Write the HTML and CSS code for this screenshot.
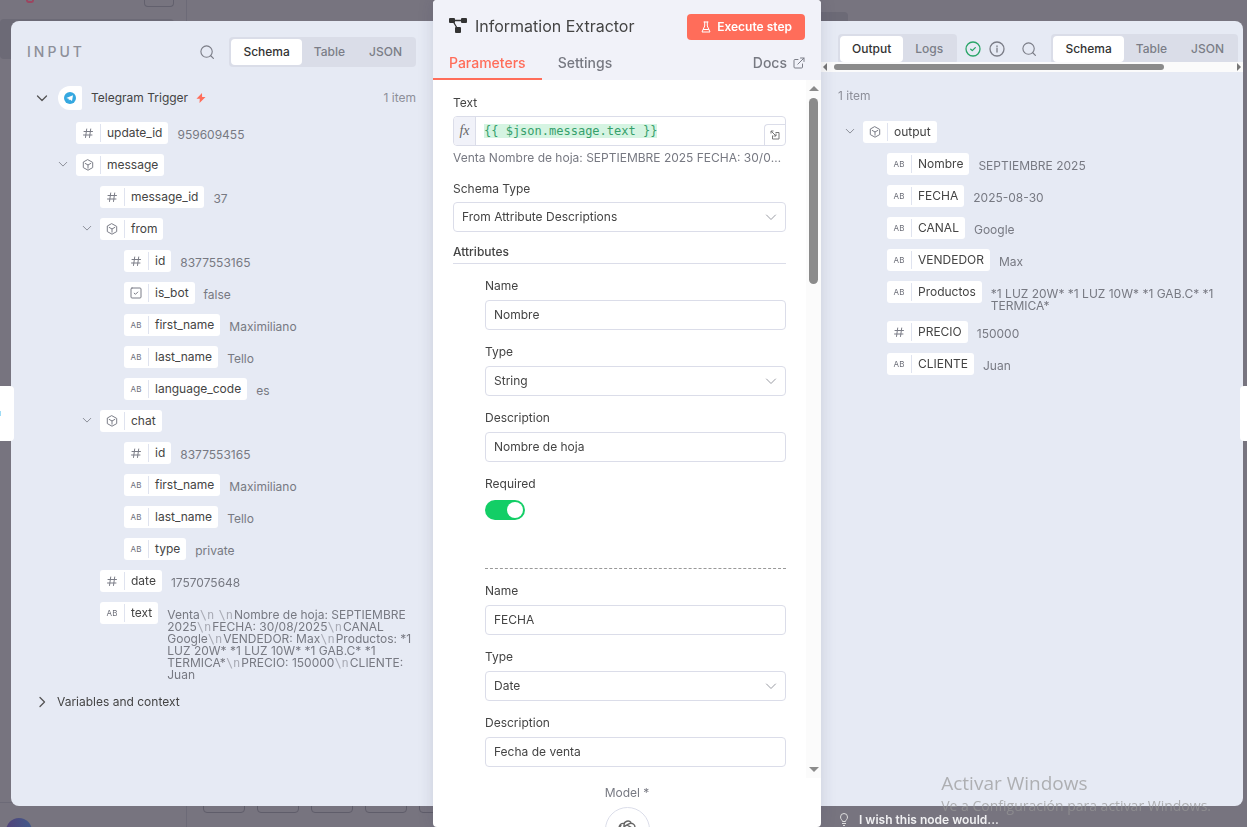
FILE: index.html
```html
<!DOCTYPE html>
<html lang="en">
<head>
  <meta charset="utf-8">
  <meta name="viewport" content="width=device-width, initial-scale=1">
  <title>Information Extractor</title>
  <link rel="stylesheet" href="styles.css">
</head>
<body>
  <!-- shared icons -->
  <svg class="sprite" aria-hidden="true">
    <symbol id="i-search" viewBox="0 0 16 16"><circle cx="7.5" cy="7.5" r="6.500"/><path d="M12.300 12.300l3 3"/></symbol>
    <symbol id="i-chevron" viewBox="0 0 12 12"><path d="M1.500 4L6 8.500 10.500 4"/></symbol>
    <symbol id="i-hash" viewBox="0 0 12 12"><path d="M4.700 2L3.500 10.500M8.700 2L7.500 10.500M2 4.500h8.500M1.500 8H10"/></symbol>
    <symbol id="i-cube" viewBox="0 0 12 12"><path d="M6 .8l4.700 2.600v5.200L6 11.200 1.300 8.600V3.400zM3.200 4.400L6 6l2.800-1.600M6 6v3.200"/></symbol>
    <symbol id="i-check" viewBox="0 0 12 12"><rect x="1" y="1" width="10" height="10" rx="1"/><path d="M4.200 6.200l1.300 1.100L7.800 5"/></symbol>
  </svg>

  <div class="backdrop" aria-hidden="true">
    <div class="sidebar">
      <div class="sidebar-top"><span class="logo"></span><span class="sidebar-btn"></span></div>
      <div class="sidebar-item"></div>
      <div class="sidebar-user"><span class="avatar"></span></div>
    </div>
    <div class="canvas">
      <div class="canvas-tab"></div>
      <div class="canvas-btns"><span></span><span></span><span></span><span></span><span></span></div>
    </div>
  </div>

  <div class="ndv">
    <section class="side side-input">
      <div class="panel">
        <div class="panel-head">
          <h2 class="panel-title">INPUT</h2>
          <button class="icon-btn" aria-label="Search"><svg class="icon icon-14"><use href="#i-search"/></svg></button>
          <div class="radio-group">
            <button class="active">Schema</button><button>Table</button><button>JSON</button>
          </div>
        </div>

        <div class="node-row">
          <svg class="icon dark"><use href="#i-chevron"/></svg>
          <span class="node-icon">
            <svg width="12" height="12" viewBox="0 0 12 12"><circle cx="6" cy="6" r="6" fill="#35a8e0"/><path d="M2.300 5.900L9 3.200 8 9 5.900 7.500 4.900 8.400 4.700 6.800z" fill="#fff"/></svg>
          </span>
          <span class="node-name">Telegram Trigger</span>
          <svg width="10" height="10" viewBox="0 0 10 10"><path d="M6 0L.5 5.800h3.300L3.500 10l6-6H6.100z" fill="#ff6d5a"/></svg>
          <span class="count">1 item</span>
        </div>

        <ul class="tree">
          <li><div class="row"><span class="pill"><i><svg class="icon"><use href="#i-hash"/></svg></i><b>update_id</b></span><span class="value">959609455</span></div></li>
          <li>
            <div class="row"><svg class="icon arrow"><use href="#i-chevron"/></svg><span class="pill"><i><svg class="icon"><use href="#i-cube"/></svg></i><b>message</b></span></div>
            <ul>
              <li><div class="row"><span class="pill"><i><svg class="icon"><use href="#i-hash"/></svg></i><b>message_id</b></span><span class="value">37</span></div></li>
              <li>
                <div class="row"><svg class="icon arrow"><use href="#i-chevron"/></svg><span class="pill"><i><svg class="icon"><use href="#i-cube"/></svg></i><b>from</b></span></div>
                <ul>
                  <li><div class="row"><span class="pill"><i><svg class="icon"><use href="#i-hash"/></svg></i><b>id</b></span><span class="value">8377553165</span></div></li>
                  <li><div class="row"><span class="pill"><i><svg class="icon"><use href="#i-check"/></svg></i><b>is_bot</b></span><span class="value">false</span></div></li>
                  <li><div class="row"><span class="pill"><i>AB</i><b>first_name</b></span><span class="value">Maximiliano</span></div></li>
                  <li><div class="row"><span class="pill"><i>AB</i><b>last_name</b></span><span class="value">Tello</span></div></li>
                  <li><div class="row"><span class="pill"><i>AB</i><b>language_code</b></span><span class="value">es</span></div></li>
                </ul>
              </li>
              <li>
                <div class="row"><svg class="icon arrow"><use href="#i-chevron"/></svg><span class="pill"><i><svg class="icon"><use href="#i-cube"/></svg></i><b>chat</b></span></div>
                <ul>
                  <li><div class="row"><span class="pill"><i><svg class="icon"><use href="#i-hash"/></svg></i><b>id</b></span><span class="value">8377553165</span></div></li>
                  <li><div class="row"><span class="pill"><i>AB</i><b>first_name</b></span><span class="value">Maximiliano</span></div></li>
                  <li><div class="row"><span class="pill"><i>AB</i><b>last_name</b></span><span class="value">Tello</span></div></li>
                  <li><div class="row"><span class="pill"><i>AB</i><b>type</b></span><span class="value">private</span></div></li>
                </ul>
              </li>
              <li><div class="row"><span class="pill"><i><svg class="icon"><use href="#i-hash"/></svg></i><b>date</b></span><span class="value">1757075648</span></div></li>
              <li><div class="row"><span class="pill"><i>AB</i><b>text</b></span><span class="value">Venta<em>\n</em> <em>\n</em>Nombre de hoja: SEPTIEMBRE 2025<em>\n</em>FECHA: 30/08/2025<em>\n</em>CANAL Google<em>\n</em>VENDEDOR: Max<em>\n</em>Productos: *1 LUZ 20W* *1 LUZ 10W* *1 GAB.C* *1 TERMICA*<em>\n</em>PRECIO: 150000<em>\n</em>CLIENTE: Juan</span></div></li>
            </ul>
          </li>
        </ul>

        <div class="node-row vars">
          <svg class="icon dark closed"><use href="#i-chevron"/></svg>
          <span>Variables and context</span>
        </div>
      </div>
    </section>

    <main class="node">
      <header class="node-head">
        <div class="title-row">
          <svg width="18" height="18" viewBox="0 0 18 18" fill="#333"><rect x="0" y="0" width="6" height="5" rx="1"/><rect x="12" y="0" width="6" height="5" rx="1"/><rect x="6" y="9" width="6" height="6" rx="1"/><path d="M5 2.500h8M4.500 4l3.500 6" stroke="#333" stroke-width="1.300"/></svg>
          <h1>Information Extractor</h1>
          <button class="execute">
            <svg width="12" height="12" viewBox="0 0 12 12" fill="none" stroke="#fff" stroke-linecap="round" stroke-linejoin="round"><path d="M4 1h4M4.700 1v4L2 11h8L7.300 5V1M3.500 8.500h5"/></svg>
            Execute step
          </button>
        </div>
        <nav class="tabs">
          <button class="active">Parameters</button>
          <button>Settings</button>
          <a href="#">Docs
            <svg class="icon" viewBox="0 0 12 12"><path d="M5 2.500H2a1 1 0 0 0-1 1V10a1 1 0 0 0 1 1h6.500a1 1 0 0 0 1-1V7M7.500 1H11v3.500M11 1L4.800 7.200"/></svg>
          </a>
        </nav>
      </header>

      <div class="node-body">
        <form class="params">
          <div class="field">
            <label for="text">Text</label>
            <div class="expression">
              <span class="fx">fx</span>
              <input id="text" type="text" value="{{ $json.message.text }}" spellcheck="false">
              <button type="button" class="expand" aria-label="Open editor">
                <svg width="10" height="10" viewBox="0 0 10 10" fill="none" stroke="#777"><path d="M1 3.500V1h2.500M1 1l5 5M6 3.500V6H3.500M5.500 2.500H9V9H2.500V5.500"/></svg>
              </button>
            </div>
            <div class="hint">Venta Nombre de hoja: SEPTIEMBRE 2025 FECHA: 30/08/2025 CANAL Google VENDEDOR: Max</div>
          </div>
          <div class="field">
            <label for="schema">Schema Type</label>
            <div class="select"><select id="schema"><option>From Attribute Descriptions</option></select><svg class="icon"><use href="#i-chevron"/></svg></div>
          </div>
          <h3 class="group-title">Attributes</h3>

          <div class="group">
            <div class="field">
              <label for="name1">Name</label>
              <input class="box" id="name1" type="text" value="Nombre">
            </div>
            <div class="field">
              <label for="type1">Type</label>
              <div class="select"><select id="type1"><option>String</option></select><svg class="icon"><use href="#i-chevron"/></svg></div>
            </div>
            <div class="field">
              <label for="desc1">Description</label>
              <input class="box" id="desc1" type="text" value="Nombre de hoja">
            </div>
            <div class="field">
              <label for="req1">Required</label>
              <input class="switch" id="req1" type="checkbox" checked>
            </div>
          </div>
          <div class="group">
            <div class="field">
              <label for="name2">Name</label>
              <input class="box" id="name2" type="text" value="FECHA">
            </div>
            <div class="field">
              <label for="type2">Type</label>
              <div class="select"><select id="type2"><option>Date</option></select><svg class="icon"><use href="#i-chevron"/></svg></div>
            </div>
            <div class="field">
              <label for="desc2">Description</label>
              <input class="box" id="desc2" type="text" value="Fecha de venta">
            </div>
          </div>
        </form>
        <div class="scroll-y"><span class="up"></span><span class="thumb"></span><span class="down"></span></div>
      </div>

      <footer class="node-foot">
        <span>Model *</span>
        <button class="model" aria-label="Model">
          <svg width="20" height="20" viewBox="0 0 20 20" fill="none" stroke="#666" stroke-width="1.400">
            <path d="M7 10.500V5a4 4 0 0 1 7.200-2.300M7 6.700l4.800-2.800a4 4 0 0 1 6 4.400M10 5l4.800 2.800a4 4 0 0 1 .8 7M13 10.500V15a4 4 0 0 1-7.200 2.300M13 13.300l-4.800 2.800a4 4 0 0 1-6-4.400M10 15l-4.800-2.800a4 4 0 0 1-.8-7M7 3.500A4 4 0 0 0 2.200 8"/>
          </svg>
        </button>
      </footer>
    </main>

    <section class="side side-output">
      <div class="panel">
        <div class="panel-head">
          <div class="radio-group">
            <button class="active">Output</button><button>Logs</button>
          </div>
          <svg class="icon icon-16 success" viewBox="0 0 16 16"><circle cx="8" cy="8" r="7"/><path d="M5.700 8.200l1.600 1.400 3-3"/></svg>
          <svg class="icon icon-16 info" viewBox="0 0 16 16"><circle cx="8" cy="8" r="7"/><path d="M8 7.300V11M8 4.800v1"/></svg>
          <button class="icon-btn" aria-label="Search"><svg class="icon icon-14"><use href="#i-search"/></svg></button>
          <div class="radio-group">
            <button class="active">Schema</button><button>Table</button><button>JSON</button>
          </div>
        </div>
        <div class="scroll-x"><span class="left"></span><span class="thumb"></span><span class="right"></span></div>

        <div class="count">1 item</div>
        <ul class="tree">
          <li>
            <div class="row"><svg class="icon arrow"><use href="#i-chevron"/></svg><span class="pill"><i><svg class="icon"><use href="#i-cube"/></svg></i><b>output</b></span></div>
            <ul>
              <li><div class="row"><span class="pill"><i>AB</i><b>Nombre</b></span><span class="value">SEPTIEMBRE 2025</span></div></li>
              <li><div class="row"><span class="pill"><i>AB</i><b>FECHA</b></span><span class="value">2025-08-30</span></div></li>
              <li><div class="row"><span class="pill"><i>AB</i><b>CANAL</b></span><span class="value">Google</span></div></li>
              <li><div class="row"><span class="pill"><i>AB</i><b>VENDEDOR</b></span><span class="value">Max</span></div></li>
              <li><div class="row"><span class="pill"><i>AB</i><b>Productos</b></span><span class="value">*1 LUZ 20W* *1 LUZ 10W* *1 GAB.C* *1 TERMICA*</span></div></li>
              <li><div class="row"><span class="pill"><i><svg class="icon"><use href="#i-hash"/></svg></i><b>PRECIO</b></span><span class="value">150000</span></div></li>
              <li><div class="row"><span class="pill"><i>AB</i><b>CLIENTE</b></span><span class="value">Juan</span></div></li>
            </ul>
          </li>
        </ul>
      </div>
      <a class="wish" href="#">
        <svg width="10" height="14" viewBox="0 0 10 14" fill="none" stroke="#ddd"><path d="M3.500 8.500C3.500 7 1.500 6.500 1.500 4a3.500 3.500 0 0 1 7 0c0 2.500-2 3-2 4.500zM3 10.500h4M4 12.500h2"/></svg>
        I wish this node would...
      </a>
    </section>
  </div>

  <span class="handle handle-left"><span class="handle-icon"></span></span>
  <span class="handle handle-right"></span>

  <div class="watermark">
    <div class="watermark-title">Activar Windows</div>
    <div>Ve a Configuración para activar Windows.</div>
  </div>
</body>
</html>
```
FILE: styles.css
```css
* {
  box-sizing: border-box;
}

body {
  margin: 0;
  height: 100vh;
  overflow: hidden;
  background: #77747f;
  color: #444;
  font-family: Inter, "Liberation Sans", sans-serif;
  font-size: 12px;
  line-height: 16px;
}

h1, h2, h3, ul {
  margin: 0;
  padding: 0;
}

ul {
  list-style: none;
}

button, input, select {
  margin: 0;
  padding: 0;
  border: none;
  background: none;
  color: inherit;
  font: inherit;
}

a {
  color: inherit;
  text-decoration: none;
}

.sprite {
  display: none;
}

.icon {
  width: 12px;
  height: 12px;
  flex: none;
  fill: none;
  stroke: #7b7d87;
  stroke-linecap: round;
  stroke-linejoin: round;
}

.icon-14 {
  width: 14px;
  height: 14px;
  stroke-width: 1.3;
}

.icon-16 {
  width: 16px;
  height: 16px;
  stroke-width: 1.3;
}

.dark {
  stroke: #555;
  stroke-width: 1.3;
}

.closed {
  transform: rotate(-90deg);
}

/* dimmed editor behind the modal */
.backdrop {
  display: flex;
  height: 100vh;
}

.sidebar {
  width: 187px;
  display: flex;
  flex-direction: column;
  border-right: 1px solid #6c6a77;
}

.sidebar-top {
  display: flex;
  justify-content: space-between;
  padding: 0 12px 0 26px;
  height: 19px;
}

.logo {
  width: 8px;
  height: 3px;
  border: 2px solid #9c4560;
  border-top: none;
  border-radius: 0 0 4px 4px;
}

.sidebar-btn {
  width: 30px;
  height: 7px;
  border: 1px solid #62606d;
  border-top: none;
  border-radius: 0 0 4px 4px;
}

.sidebar-item {
  height: 40px;
  margin-right: 12px;
  background: #6c6a76;
  border-radius: 4px;
}

.sidebar-user {
  margin-top: auto;
  height: 25px;
  padding: 15px 6px 0;
  border-top: 1px solid #6c6a77;
  overflow: hidden;
}

.avatar {
  display: block;
  width: 26px;
  height: 26px;
  border-radius: 50%;
  background: linear-gradient(90deg, #51437a, #41598a);
}

.canvas {
  flex: 1;
  display: flex;
  flex-direction: column;
  justify-content: space-between;
  padding: 12px 0 14px 16px;
}

.canvas-tab {
  width: 245px;
  height: 20px;
  margin-left: 400px;
  background: #6c6a76;
  border-radius: 4px;
}

.canvas-btns {
  display: flex;
  gap: 12px;
}

.canvas-btns span {
  width: 42px;
  height: 30px;
  border: 1px solid #5f5d6a;
  border-radius: 4px;
}

/* modal */
.ndv {
  position: fixed;
  inset: 0;
  display: flex;
  padding: 0 4px 0 11px;
}

.side {
  flex: 1;
  min-width: 0;
  display: flex;
  flex-direction: column;
  padding-top: 21px;
}

.panel {
  flex: 1;
  min-height: 0;
  background: #e6eaf4;
}

.side-input {
  padding-bottom: 21px;
}

.side-input .panel {
  padding: 16px 17px 16px 16px;
  border-radius: 8px 0 0 8px;
}

.side-output .panel {
  border-radius: 0 8px 8px 0;
}

.panel-head {
  display: flex;
  align-items: center;
  height: 30px;
}

.panel-title {
  margin-right: auto;
  font-size: 14px;
  font-weight: 500;
  letter-spacing: 3px;
  color: #8d8f99;
}

.icon-btn {
  display: flex;
}

.side-input .icon-btn {
  margin-right: 15px;
}

.radio-group {
  display: flex;
  height: 30px;
  padding: 2px;
  background: #dadde8;
  border-radius: 4px;
}

.radio-group button {
  height: 26px;
  padding: 0 12px;
  border-radius: 4px;
  font-weight: 500;
  color: #7b7d87;
}

.radio-group .active {
  background: #fff;
  color: #333;
}

.node-row {
  display: flex;
  align-items: center;
  height: 24px;
  margin-top: 19px;
  padding-left: 9px;
}

.node-icon {
  display: flex;
  align-items: center;
  justify-content: center;
  width: 24px;
  height: 24px;
  margin: 0 9px 0 10px;
  border-radius: 12px 2px 2px 12px;
  background: #fff;
}

.node-name {
  margin-right: 8px;
}

.count {
  color: #8d8f99;
}

.node-row .count {
  margin-left: auto;
}

.vars {
  margin-top: 3px;
  gap: 9px;
}

.tree {
  padding: 12px 0 0 49px;
}

.tree ul {
  padding-left: 24px;
}

.row {
  display: flex;
  align-items: flex-start;
  min-height: 23px;
  margin-bottom: 9px;
}

.arrow {
  width: 10px;
  height: 10px;
  margin: 5px 8px 0 -18px;
}

.pill {
  flex: none;
  display: flex;
  align-items: center;
  height: 22px;
  border-radius: 3px;
  background: #fff;
}

.pill i {
  display: flex;
  align-items: center;
  justify-content: center;
  width: 25px;
  height: 18px;
  padding-bottom: 1px;
  border-right: 1px solid #dfe3ef;
  font-size: 8px;
  font-style: normal;
  color: #6b6d77;
}

.pill b {
  padding: 0 6px;
  font-weight: 400;
}

.value {
  padding: 7px 0 0 9px;
  line-height: 12px;
  color: #777982;
}

.value em {
  padding-right: 1px;
  font-family: "DejaVu Sans Mono", monospace;
  font-style: normal;
  line-height: 0;
  color: #a9abb5;
}

/* node settings */
.node {
  flex: 0 0 388px;
  z-index: 1;
  display: flex;
  flex-direction: column;
  overflow: hidden;
  border-radius: 4px;
  background: #fff;
  box-shadow: 0 0 16px rgba(50, 50, 80, 0.15);
}

.node-head {
  background: #f1f2f9;
}

.title-row {
  display: flex;
  align-items: center;
  gap: 8px;
  padding: 14px 16px 0;
}

h1 {
  padding-bottom: 2px;
  font-size: 16px;
  font-weight: 400;
  line-height: 24px;
}

.execute {
  display: flex;
  align-items: center;
  gap: 5px;
  height: 26px;
  margin-left: auto;
  padding: 0 13px;
  border-radius: 4px;
  background: #ff6d5a;
  color: #fff;
  font-weight: 600;
}

.tabs {
  display: flex;
  height: 40px;
  font-size: 14px;
  font-weight: 500;
  color: #777982;
}

.tabs button, .tabs a {
  display: flex;
  align-items: center;
  gap: 6px;
  padding: 8px 16px 0;
  border-bottom: 2px solid transparent;
}

.tabs .active {
  color: #ff6d5a;
  border-color: #ff6d5a;
}

.tabs a {
  margin-left: auto;
}

.node-body {
  flex: 1;
  min-height: 0;
  display: flex;
  overflow: hidden;
}

.params {
  flex: 1;
  min-width: 0;
  padding: 15px 20px 0;
}

.field {
  margin-bottom: 15px;
}

.field label {
  display: block;
  margin-bottom: 5px;
}

.group .field {
  margin-bottom: 14px;
}

.group .field label {
  margin-bottom: 6px;
}

.expression, .box, .select select {
  width: 100%;
  height: 30px;
  border: 1px solid #dbdde9;
  border-radius: 4px;
  background: #fff;
}

.box, .select select {
  display: block;
  padding: 0 8px 1px;
  appearance: none;
}

.select {
  display: grid;
  align-items: center;
}

.select select, .select svg {
  grid-area: 1 / 1;
}

.select svg {
  justify-self: end;
  margin-right: 9px;
  stroke: #999ba3;
  pointer-events: none;
}

.expression {
  display: flex;
  overflow: hidden;
}

.fx {
  width: 22px;
  margin-right: 8px;
  border-right: 1px solid #dbdde9;
  background: #f1f2f9;
  font: italic 14px/27px "Liberation Serif", serif;
  text-align: center;
  color: #666;
}

.expression input {
  width: 24ch;
  height: 14px;
  margin-top: 7px;
  font-family: "DejaVu Sans Mono", monospace;
  line-height: 14px;
  color: #35a06b;
  background: #d5f4e2;
}

.expand {
  display: flex;
  align-items: center;
  justify-content: center;
  align-self: flex-end;
  width: 21px;
  height: 21px;
  margin-left: auto;
  border: 1px solid #dbdde9;
  border-width: 1px 0 0 1px;
  border-radius: 4px 0 0 0;
}

.hint {
  margin-top: 4px;
  overflow: hidden;
  text-overflow: ellipsis;
  white-space: nowrap;
  color: #777982;
}

.group-title {
  margin-top: -3px;
  padding-bottom: 3px;
  border-bottom: 1px solid #dbdde9;
  font-size: 12px;
  font-weight: 500;
}

.group {
  margin-left: 32px;
  padding: 14px 0 34px;
}

.group + .group {
  border-top: 1px dashed #999;
}

.switch {
  display: flex;
  align-items: center;
  justify-content: flex-end;
  width: 40px;
  height: 20px;
  margin-top: 8px;
  padding: 2px;
  appearance: none;
  border-radius: 10px;
  background: #13ce66;
}

.switch::before {
  content: "";
  width: 16px;
  height: 16px;
  border-radius: 50%;
  background: #fff;
}

.scroll-y {
  display: flex;
  flex-direction: column;
  align-items: center;
  width: 15px;
  padding: 6px 0;
  background: #fbfbfb;
}

.scroll-y .thumb {
  width: 9px;
  height: 186px;
  margin: 7px 0 auto;
  border-radius: 5px;
  background: #8b8b8b;
}

.up, .down {
  border: 5px solid transparent;
}

.up { border-top: none; border-bottom-color: #8b8b8b; }
.down { border-bottom: none; border-top-color: #8b8b8b; }

.node-foot {
  flex: none;
  display: flex;
  flex-direction: column;
  align-items: center;
  gap: 6px;
  height: 49px;
  padding: 7px 0 0;
  overflow: hidden;
  color: #777982;
}

.model {
  flex: none;
  display: flex;
  align-items: center;
  justify-content: center;
  width: 45px;
  height: 45px;
  border: 1px solid #dbdde9;
  border-radius: 50%;
}

/* output side */
.side-output .panel-head {
  align-items: flex-start;
  height: 41px;
  padding: 13px 5px 0 17px;
  overflow: hidden;
}

.side-output .panel-head > svg {
  margin-top: 7px;
}

.side-output .icon-btn {
  margin-top: 8px;
}

.side-output .panel-head > .radio-group:last-child {
  margin-left: auto;
}

.panel-head .success {
  margin-left: 8px;
  stroke: #29a568;
}

.panel-head .info {
  margin: 0 17px 0 8px;
}

.scroll-x {
  display: flex;
  align-items: center;
  height: 10px;
  padding: 0 2px;
  background: #fbfbfb;
}

.scroll-x .thumb {
  width: 79%;
  height: 6px;
  margin: 0 auto 0 7px;
  border-radius: 3px;
  background: #8b8b8b;
}

.left, .right {
  border: 4px solid transparent;
}

.left { border-left: none; border-right-color: #777; }
.right { border-right: none; border-left-color: #777; }

.side-output .count {
  padding: 16px 17px 0;
}

.side-output .tree {
  padding: 17px 14px 0 42px;
}

.wish {
  display: flex;
  align-items: center;
  gap: 10px;
  height: 21px;
  padding: 6px 18px 0;
  font-weight: 600;
  color: #f0f0f2;
}

.handle {
  position: fixed;
  top: calc(50% - 28px);
  width: 14px;
  height: 55px;
  background: #fff;
}

.handle-left {
  left: 0;
  display: flex;
  align-items: center;
  border-radius: 0 4px 4px 0;
}

.handle-icon {
  width: 1px;
  height: 5px;
  background: #9fdcf5;
}

.handle-right {
  right: 0;
  width: 7px;
  border-radius: 4px 0 0 4px;
}

.watermark {
  position: fixed;
  right: 36px;
  bottom: 11px;
  z-index: 2;
  font: 14px/20px "Open Sans", sans-serif;
  color: rgba(150, 150, 150, 0.7);
  pointer-events: none;
}

.watermark-title {
  font-size: 19px;
  line-height: 26px;
}
```
